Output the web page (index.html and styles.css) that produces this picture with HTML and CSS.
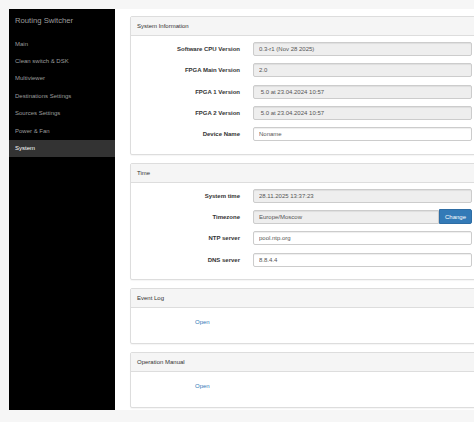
FILE: index.html
```html
<!DOCTYPE html>
<html lang="en">
<head>
    <meta charset="UTF-8">
    <meta name="viewport" content="width=device-width, initial-scale=1.0">
    <title>Routing Switcher</title>
    <link rel="stylesheet" href="styles.css">
</head>
<body>
    <div class="app">
        <nav class="sidebar">
            <div class="brand">Routing Switcher</div>
            <a href="#" class="nav-item">Main</a>
            <a href="#" class="nav-item">Clean switch &amp; DSK</a>
            <a href="#" class="nav-item">Multiviewer</a>
            <a href="#" class="nav-item">Destinations Settings</a>
            <a href="#" class="nav-item">Sources Settings</a>
            <a href="#" class="nav-item">Power &amp; Fan</a>
            <a href="#" class="nav-item active">System</a>
        </nav>
        <main class="content">
            <section class="panel">
                <div class="panel-heading">System Information</div>
                <div class="panel-body form">
                    <label>Software CPU Version</label>
                    <input class="form-control" readonly value="0.3-r1 (Nov 28 2025)">
                    <label>FPGA Main Version</label>
                    <input class="form-control" readonly value="2.0">
                    <label>FPGA 1 Version</label>
                    <input class="form-control" readonly value=" 5.0 at 23.04.2024 10:57">
                    <label>FPGA 2 Version</label>
                    <input class="form-control" readonly value=" 5.0 at 23.04.2024 10:57">
                    <label>Device Name</label>
                    <input class="form-control" value="Noname">
                </div>
            </section>
            <section class="panel">
                <div class="panel-heading">Time</div>
                <div class="panel-body form">
                    <label>System time</label>
                    <input class="form-control" readonly value="28.11.2025 13:37:23">
                    <label>Timezone</label>
                    <div class="input-group">
                        <input class="form-control" readonly value="Europe/Moscow">
                        <button class="btn">Change</button>
                    </div>
                    <label>NTP server</label>
                    <input class="form-control" value="pool.ntp.org">
                    <label>DNS server</label>
                    <input class="form-control" value="8.8.4.4">
                </div>
            </section>
            <section class="panel">
                <div class="panel-heading">Event Log</div>
                <div class="panel-body link-body">
                    <a href="#" class="open-link">Open</a>
                </div>
            </section>
            <section class="panel">
                <div class="panel-heading">Operation Manual</div>
                <div class="panel-body link-body">
                    <a href="#" class="open-link">Open</a>
                </div>
            </section>
        </main>
    </div>
</body>
</html>
```

FILE: styles.css
```css
html, body {
    overflow: hidden;
}

body {
    margin: 0;
    background: #f6f6f6;
    font-family: "Liberation Sans", Arial, sans-serif;
    font-size: 6px;
    color: #333;
}

a {
    text-decoration: none;
}

.app {
    display: flex;
    width: 520px;
    height: 401px;
    margin: 9px 0 0 9px;
}

.sidebar {
    width: 106px;
    flex: none;
    background: #000;
}

.brand {
    color: #9d9d9d;
    font-size: 7.7px;
    line-height: 10px;
    padding: 7px 0 0 6px;
    margin-bottom: 9.6px;
}

.nav-item {
    display: block;
    height: 17.4px;
    line-height: 17.4px;
    padding-left: 6px;
    color: #9d9d9d;
}

.nav-item.active {
    background: #333;
    color: #fff;
}

.content {
    flex: 1;
    background: #fff;
    padding: 7px 0 0 15px;
}

.panel {
    width: 348px;
    border: 1px solid #ddd;
    border-radius: 2px;
    margin-bottom: 8px;
    background: #fff;
    box-shadow: 0 1px 1px rgba(0, 0, 0, 0.04);
}

.panel-heading {
    height: 18px;
    line-height: 18px;
    padding-left: 6px;
    background: #f5f5f5;
    border-bottom: 1px solid #ddd;
}

.form {
    display: grid;
    grid-template-columns: 109px 1fr;
    column-gap: 13px;
    row-gap: 7.3px;
    align-items: center;
    padding: 6px 7px 12.5px 0;
}

.form label {
    text-align: right;
    font-weight: bold;
    line-height: 8px;
}

.form-control {
    box-sizing: border-box;
    width: 100%;
    height: 14px;
    margin: 0;
    padding: 0 5px;
    font-family: inherit;
    font-size: 6px;
    color: #555;
    background: #fff;
    border: 1px solid #ccc;
    border-radius: 2px;
    box-shadow: inset 0 1px 1px rgba(0, 0, 0, 0.07);
}

.form-control[readonly] {
    background: #eee;
}

.input-group {
    display: flex;
}

.input-group .form-control {
    border-radius: 2px 0 0 2px;
}

.btn {
    flex: none;
    width: 33px;
    height: 15px;
    margin: -0.5px 0;
    padding: 0;
    font-family: inherit;
    font-size: 6px;
    color: #fff;
    background: #337ab7;
    border: 1px solid #2e6da4;
    border-radius: 0 2px 2px 0;
}

.link-body {
    height: 35px;
    box-sizing: border-box;
    padding: 10px 0 0 64px;
    line-height: 8px;
}

.open-link {
    color: #337ab7;
}
```
